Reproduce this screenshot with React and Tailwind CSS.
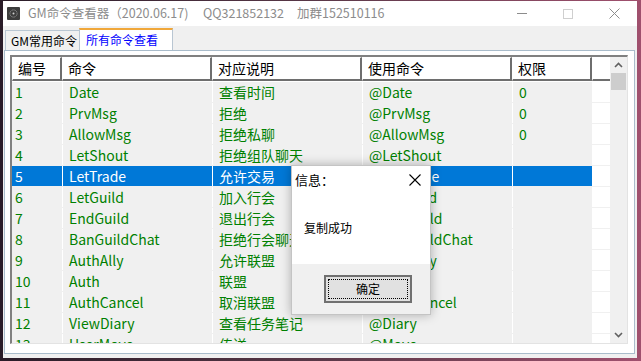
import React from "react";

const rows = [
  ["1", "Date", "查看时间", "@Date", "0"],
  ["2", "PrvMsg", "拒绝", "@PrvMsg", "0"],
  ["3", "AllowMsg", "拒绝私聊", "@AllowMsg", "0"],
  ["4", "LetShout", "拒绝组队聊天", "@LetShout", ""],
  ["5", "LetTrade", "允许交易", "@LetTrade", ""],
  ["6", "LetGuild", "加入行会", "@LetGuild", ""],
  ["7", "EndGuild", "退出行会", "@EndGuild", ""],
  ["8", "BanGuildChat", "拒绝行会聊天", "@BanGuildChat", ""],
  ["9", "AuthAlly", "允许联盟", "@AuthAlly", ""],
  ["10", "Auth", "联盟", "@Auth", ""],
  ["11", "AuthCancel", "取消联盟", "@AuthCancel", ""],
  ["12", "ViewDiary", "查看任务笔记", "@Diary", ""],
  ["13", "UserMove", "传送", "@Move", ""],
];

const cols = [
  { label: "编号", w: "w-[50px]", pl: "pl-[3px]" },
  { label: "命令", w: "w-[150px]", pl: "pl-[6px]" },
  { label: "对应说明", w: "w-[150px]", pl: "pl-[6px]" },
  { label: "使用命令", w: "w-[150px]", pl: "pl-[6px]" },
  { label: "权限", w: "w-[80px]", pl: "pl-[6px]" },
];

function Chevron({ down }) {
  return (
    <svg width="9" height="6" viewBox="0 0 9 6" className={down ? "rotate-180" : ""}>
      <path d="M1 5 L4.5 1.5 L8 5" fill="none" stroke="#606060" strokeWidth="1.6" />
    </svg>
  );
}

export default function App() {
  return (
    <div className="w-[641px] h-[361px] overflow-hidden bg-gradient-to-r from-[#2a1c28] via-[#5a3848] to-[#a0506e] pl-[3px] pt-px font-['Noto_Sans_CJK_SC',sans-serif]">
      <div className="relative w-[634px] h-[357px] flex flex-col bg-[#f0f0f0]">
        {/* Title bar */}
        <div className="h-[25px] bg-white flex items-center relative">
          <svg width="13" height="13" viewBox="0 0 13 13" className="ml-[4px] shrink-0">
            <rect width="13" height="13" rx="1" fill="#3d3d3d" />
            <circle cx="6.5" cy="6.5" r="3.6" fill="none" stroke="#b0b0b0" strokeWidth="1" strokeDasharray="1 1.2" />
            <circle cx="6.5" cy="6.5" r="1" fill="#d0d0d0" />
          </svg>
          <div className="ml-[8px] w-[175px] shrink-0 text-[12.5px] text-[#8c8c8c] whitespace-nowrap">
            GM命令查看器（2020.06.17)
          </div>
          <div className="w-[94px] shrink-0 text-[12.5px] text-[#8c8c8c] whitespace-nowrap">QQ321852132</div>
          <div className="shrink-0 text-[12.5px] text-[#8c8c8c] whitespace-nowrap">加群152510116</div>
          <div className="absolute right-0 top-0 h-[25px] flex">
            <div className="w-[46px] h-full flex items-center justify-center">
              <div className="w-[10px] h-px bg-[#8c8c8c]" />
            </div>
            <div className="w-[46px] h-full flex items-center justify-center">
              <div className="w-[10px] h-[10px] border border-[#cfcfcf]" />
            </div>
            <div className="w-[46px] h-full flex items-center justify-center">
              <svg width="11" height="11" viewBox="0 0 11 11">
                <path d="M0.5 0.5 L10.5 10.5 M10.5 0.5 L0.5 10.5" stroke="#8c8c8c" strokeWidth="1" />
              </svg>
            </div>
          </div>
        </div>

        {/* Tabs */}
        <div className="h-[24px] flex items-end pl-[2px]">
          <div className="h-[20px] w-[75px] border border-b-0 border-[#b9c6d2] bg-[#f0f0f0] flex items-center pl-[5px] text-[12px] text-black">
            GM常用命令
          </div>
          <div className="h-[22px] w-[94px] -ml-px bg-white border-x border-[#b9c6d2] border-t-2 border-t-[#f0a73a] flex items-center pl-[6px] text-[12px] text-[#0000ff]">
            所有命令查看
          </div>
        </div>

        {/* Panel */}
        <div className="ml-px w-[631px] h-[304px] bg-white border border-[#a9bccb] pl-[5px] pt-[4px]">
          <div className="w-[618px] h-[289px] border-t-2 border-l-2 border-[#808080] border-r border-b border-r-[#e3e3e3] border-b-[#e3e3e3] flex bg-white">
            <div className="w-[598px] h-[286px] flex flex-col overflow-hidden">
              {/* Header */}
              <div className="flex h-[24px] shrink-0">
                {cols.map((c) => (
                  <div
                    key={c.label}
                    className={`${c.w} h-full border-t border-l border-white border-r-2 border-b-2 border-r-[#6e6e6e] border-b-[#6e6e6e] flex items-center pl-[5px] text-[14px] text-black`}
                  >
                    {c.label}
                  </div>
                ))}
                <div className="w-[18px] h-full border-t border-l border-white border-b-2 border-b-[#6e6e6e]" />
              </div>
              {/* Rows */}
              <div className="mt-px flex flex-col">
                {rows.map((r, i) => {
                  const sel = i === 4;
                  return (
                    <div key={i} className="h-[21px] shrink-0 flex border-b border-[#f0f0f0]">
                      {r.map((v, j) => (
                        <div
                          key={j}
                          className={`${cols[j].w} h-full ${cols[j].pl} ${j > 0 ? "border-l border-white" : ""} ${
                            sel ? "bg-[#0078d7] text-white" : "bg-[#f0f0f0] text-[#008000]"
                          } flex items-center text-[14px] whitespace-nowrap overflow-hidden`}
                        >
                          {v}
                        </div>
                      ))}
                      <div className="w-[18px] h-full bg-white" />
                    </div>
                  );
                })}
              </div>
            </div>
            {/* Scrollbar */}
            <div className="w-[17px] h-[286px] bg-[#f0f0f0] flex flex-col items-center">
              <div className="h-[16px] w-full flex items-center justify-center">
                <Chevron />
              </div>
              <div className="w-[15px] h-[17px] bg-[#cdcdcd]" />
              <div className="flex-1" />
              <div className="h-[17px] w-full flex items-center justify-center">
                <Chevron down />
              </div>
            </div>
          </div>
        </div>

        {/* Message dialog */}
        <div className="absolute left-[288px] top-[164px] w-[140px] h-[150px] border border-[#c4c4c4] shadow-[0_0_10px_rgba(0,0,0,0.28)] flex flex-col bg-[#f0f0f0]">
          <div className="h-[98px] bg-white flex flex-col">
            <div className="h-[27px] flex items-center justify-between pl-[3px] pr-[9px]">
              <span className="text-[13px] text-black">信息：</span>
              <svg width="12" height="12" viewBox="0 0 12 12">
                <path d="M0.5 0.5 L11.5 11.5 M11.5 0.5 L0.5 11.5" stroke="#000" strokeWidth="1.1" />
              </svg>
            </div>
            <div className="pl-[12px] mt-[26px] text-[12px] text-black">复制成功</div>
          </div>
          <div className="flex-1 flex items-start pl-[32px] pt-[11px]">
            <div className="w-[88px] h-[28px] border-2 border-[#707070] bg-[#e1e1e1] p-[2px]">
              <div className="w-full h-full border border-dotted border-black flex items-center justify-center text-[12px] text-black">
                确定
              </div>
            </div>
          </div>
        </div>
      </div>
    </div>
  );
}
